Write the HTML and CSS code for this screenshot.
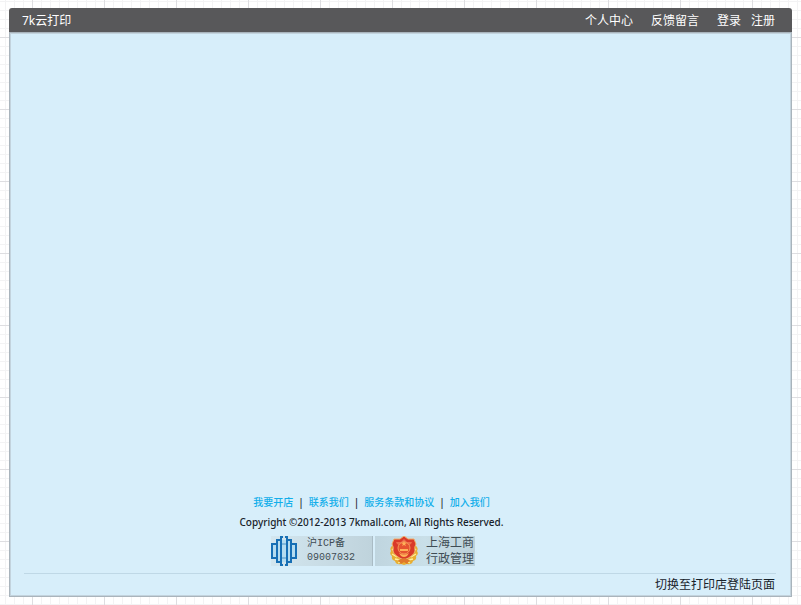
FILE: index.html
```html
<!DOCTYPE html>
<html lang="zh-CN">
<head>
<meta charset="utf-8">
<title>7k云打印</title>
<link rel="stylesheet" href="styles.css">
</head>
<body>
<div class="page">
  <header class="topbar">
    <a class="brand" href="#">7k云打印</a>
    <nav class="topnav">
      <a href="#">个人中心</a>
      <a href="#">反馈留言</a>
      <span class="account"><a href="#">登录</a><a href="#">注册</a></span>
    </nav>
  </header>
  <main class="panel">
    <footer class="footer">
      <nav class="links">
        <a href="#">我要开店</a><span>|</span><a href="#">联系我们</a><span>|</span><a href="#">服务条款和协议</a><span>|</span><a href="#">加入我们</a>
      </nav>
      <p class="copyright">Copyright ©2012-2013 7kmall.com, All Rights Reserved.</p>
      <div class="badges">
        <a class="badge icp" href="#">
          <svg class="globe" viewBox="0 0 26 30" aria-hidden="true">
            <path d="M7 4H19V26H7ZM2 8H24V22H2Z" fill="#b5dcf0"/>
            <g fill="none" stroke="#176fb5" stroke-width="2">
              <path d="M12 1H10V29H12M14 1H16V29H14"/>
              <path d="M9 4H6V26H9M17 4H20V26H17"/>
              <path d="M5 8H1V22H5M21 8H25V22H21"/>
            </g>
            <path d="M11 8H15M11 22H15" stroke="#4d94c6" stroke-width="1"/>
          </svg>
          <span class="mono">沪ICP备<br>09007032</span>
        </a>
        <a class="badge gov" href="#">
          <svg class="emblem" viewBox="0 0 30 30" aria-hidden="true">
            <path d="M4 9Q0 12 2 15Q0 18 3 20Q2 24 6 25Q7 29 12 28L15 29L18 28Q23 29 24 25Q28 24 27 20Q30 18 28 15Q30 12 26 9L23 19L15 25L7 19Z" fill="#e8ae32"/>
            <path d="M3 13L7 17M3 18L8 21M6 23L11 24M9 27L14 25M27 13L23 17M27 18L22 21M24 23L19 24M21 27L16 25" stroke="#fff09a" stroke-width="1.3" fill="none"/>
            <path d="M15 0L19 3L25 3L27 8Q25 11 26 15Q25 20 15 24Q5 20 4 15Q5 11 3 8L5 3L11 3Z" fill="#d93a29" stroke="#f0b06a" stroke-width="1"/>
            <path d="M7 6L12 6L15 3L18 6L23 6Q22 10 15 10Q8 10 7 6Z" fill="#ec6c4c"/>
            <circle cx="15" cy="12" r="6" fill="#e65331" stroke="#f49a55"/>
            <path d="M11 13H19V15H11ZM15 5L16 7H18L16 8L17 10L15 9L13 10L14 8L12 7H14ZM10 17Q15 20 20 17L18 20Q15 22 12 20Z" fill="#ffb158"/>
            <path d="M9 24L15 22L21 24L18 28L15 26L12 28Z" fill="#df782c"/>
          </svg>
          <span>上海工商<br>行政管理</span>
        </a>
      </div>
    </footer>
    <div class="switch"><a href="#">切换至打印店登陆页面</a></div>
  </main>
</div>
</body>
</html>
```
FILE: styles.css
```css
* {
  box-sizing: border-box;
}

body {
  margin: 0;
  background-color: #fff;
  background-image:
    linear-gradient(90deg, #dedee1 1px, transparent 1px),
    linear-gradient(#dedee1 1px, transparent 1px),
    linear-gradient(90deg, #f3f3f4 1px, transparent 1px),
    linear-gradient(#f3f3f4 1px, transparent 1px);
  background-size: 72px 72px, 72px 72px, 9px 9px, 9px 9px;
  background-position: 32px 0, 0 37px, 5px 0, 0 1px;
  font-family: "Noto Sans", "Noto Sans CJK SC", sans-serif;
  font-size: 12px;
  line-height: 16px;
  color: #18222a;
}

a {
  color: inherit;
  text-decoration: none;
}

.page {
  display: flex;
  flex-direction: column;
  min-height: 100vh;
  padding: 8px 9px;
}

.topbar {
  display: flex;
  justify-content: space-between;
  align-items: center;
  height: 24px;
  padding: 1px 17px 0 13px;
  background: #58585a;
  border-radius: 3px 3px 0 0;
  color: #fff;
}

.topnav {
  display: flex;
  gap: 18px;
}

.account {
  display: flex;
  gap: 10px;
}

.panel {
  flex: 1;
  display: flex;
  flex-direction: column;
  justify-content: flex-end;
  padding: 0 15px 0 14px;
  background: #d7eefa;
  border: 1px solid #a9b4bc;
  box-shadow: inset 1px 1px #c3d3dd, inset -1px -1px #c3d3dd;
}

.footer {
  display: flex;
  flex-direction: column;
  align-items: center;
  padding-right: 57px;
}

.links {
  display: flex;
  gap: 5px;
  font-size: 10px;
  font-weight: 500;
  color: #18222a;
}

.links a {
  color: #12aeea;
}

.copyright {
  margin: 4px 0 6px;
  font-size: 10px;
  font-weight: 500;
}

.badges {
  display: flex;
  gap: 2px;
  margin-bottom: 7px;
  padding-left: 3px;
}

.badge {
  display: flex;
  align-items: center;
  height: 30px;
  background: linear-gradient(90deg, #d3e6ef, #bfd3dc);
  line-height: 16px;
  color: #3f4c54;
}

.icp {
  gap: 10px;
  padding-right: 17px;
  border-right: 1px solid #a9bbc4;
}

.mono {
  font-family: "Liberation Mono", "Noto Sans CJK SC", monospace;
  font-size: 10px;
  line-height: 14px;
}

.gov {
  gap: 7px;
  padding: 0 1px 0 14px;
  background: linear-gradient(90deg, #bfd5df, #c9dfe8 50%, #bed3dc);
}

.globe {
  width: 26px;
  height: 30px;
}

.emblem {
  width: 30px;
  height: 30px;
}

.switch {
  padding: 3px 1px;
  border-top: 1px solid #bfd8e6;
  text-align: right;
}
```
